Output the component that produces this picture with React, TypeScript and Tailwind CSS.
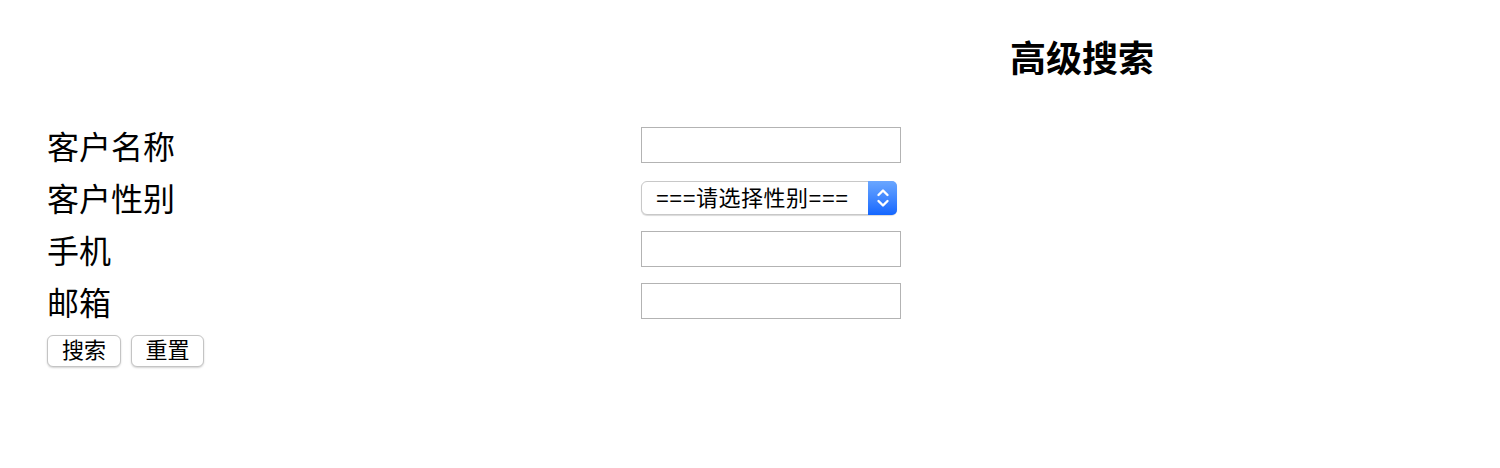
import React from 'react';

const labelFont = { fontFamily: '"Liberation Serif", "Noto Sans CJK SC", serif' };

const Stepper = () => (
  <span className="pointer-events-none absolute right-0 top-0 flex h-full w-[29px] items-center justify-center rounded-r-[5px] bg-gradient-to-b from-[#6aa6ff] to-[#1366ff]">
    <svg width="16" height="26" viewBox="0 0 16 26" fill="none" stroke="white" strokeWidth="2.4" strokeLinecap="round" strokeLinejoin="round">
      <path d="M3.5 10 8 5.5 12.5 10" />
      <path d="M3.5 16 8 20.5 12.5 16" />
    </svg>
  </span>
);

const TextInput = () => (
  <input type="text" className="mt-[5px] h-[36px] w-[260px] border border-[#b3b3b3] bg-white outline-none" />
);

const Row = ({ label, children }: { label: string; children: React.ReactNode }) => (
  <div className="grid h-[52px] grid-cols-[594px_1fr]">
    <div className="text-[32px] leading-[52px] text-black" style={labelFont}>
      {label}
    </div>
    <div>{children}</div>
  </div>
);

const App = () => {
  return (
    <main className="h-[468px] w-full bg-white text-black" style={labelFont}>
      {/* Title */}
      <div className="pl-[1010px] pt-[42px]">
        <h1 className="h-[36px] text-[36px] font-bold leading-none">高级搜索</h1>
      </div>

      {/* Search form */}
      <form className="pl-[47px] pt-[44px]">
        <Row label="客户名称">
          <TextInput />
        </Row>
        <Row label="客户性别">
          <div className="relative mt-[7px] h-[34px] w-[256px]">
            <select
              defaultValue=""
              className="h-full w-full appearance-none rounded-[6px] border border-[#c8c8c8] bg-white pl-[14px] text-[22px] tracking-[0.5px] text-black shadow-[0_1px_1px_rgba(0,0,0,0.15)] outline-none"
              style={{ fontFamily: '"Liberation Sans", "Noto Sans CJK SC", sans-serif' }}
            >
              <option value="">===请选择性别===</option>
              <option value="male">男</option>
              <option value="female">女</option>
            </select>
            <Stepper />
          </div>
        </Row>
        <Row label="手机">
          <TextInput />
        </Row>
        <Row label="邮箱">
          <TextInput />
        </Row>

        {/* Buttons */}
        <div className="mt-[5px] flex gap-[10px]">
          <button type="button" className="h-[32px] w-[74px] rounded-[6px] border border-[#c4c4c4] bg-white text-[22px] leading-none shadow-[0_1px_2px_rgba(0,0,0,0.18)]">
            搜索
          </button>
          <button type="button" className="h-[32px] w-[73px] rounded-[6px] border border-[#c4c4c4] bg-white text-[22px] leading-none shadow-[0_1px_2px_rgba(0,0,0,0.18)]">
            重置
          </button>
        </div>
      </form>
    </main>
  );
};

export default App;
